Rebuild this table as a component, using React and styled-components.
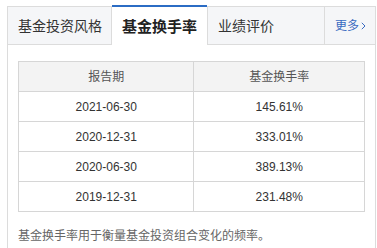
import React from "react";
import styled, { createGlobalStyle } from "styled-components";

const Global = createGlobalStyle`
  html, body { margin: 0; padding: 0; background: #fff; }
  body {
    font-family: "Liberation Sans", "Noto Sans CJK SC", sans-serif;
    color: #333;
  }
`;

const Page = styled.div`
  padding: 6px 0 0 7px;
`;

const Panel = styled.div`
  box-sizing: border-box;
  width: 369px;
  border-left: 1px solid #dcdcdc;
  border-right: 1px solid #dcdcdc;
  min-height: 242px;
`;

const TabBar = styled.div`
  display: flex;
  align-items: flex-start;
  height: 39px;
`;

const Tab = styled.div`
  box-sizing: border-box;
  display: flex;
  align-items: center;
  height: ${(p) => (p.$active ? "40px" : "39px")};
  margin-top: ${(p) => (p.$active ? "-1px" : "0")};
  padding: ${(p) => p.$pad || "0 10px"};
  flex: ${(p) => (p.$grow ? "1 1 auto" : "0 0 auto")};
  width: ${(p) => p.$width || "auto"};
  background: ${(p) => (p.$active ? "#fff" : "#f5f6f8")};
  border-top: ${(p) => (p.$active ? "2px solid #2b6cc4" : "1px solid #dcdcdc")};
  border-bottom: ${(p) => (p.$active ? "none" : "1px solid #dcdcdc")};
  border-right: ${(p) => (p.$divider ? "1px solid #dcdcdc" : "none")};
  border-left: ${(p) => (p.$leftDivider ? "1px solid #dcdcdc" : "none")};
  font-size: ${(p) => (p.$active ? "15px" : "14px")};
  font-weight: ${(p) => (p.$active ? 700 : 400)};
  color: ${(p) => (p.$active ? "#222" : "#333")};
  white-space: nowrap;
  line-height: 1;
`;

const More = styled.span`
  display: flex;
  align-items: center;
  gap: 2px;
  font-size: 12px;
  color: #3a6bc1;
`;

const Content = styled.div`
  padding: 16px 10px 0 10px;
`;

const Table = styled.table`
  border-collapse: separate;
  border-spacing: 0;
  width: 347px;
  border-top: 1px solid #d6d6d6;
  border-left: 1px solid #d6d6d6;
  font-size: 12px;
`;

const Cell = styled.td`
  box-sizing: border-box;
  height: 30px;
  padding: 0;
  width: ${(p) => p.$w};
  text-align: center;
  vertical-align: middle;
  border-right: 1px solid #d6d6d6;
  border-bottom: 1px solid #d6d6d6;
  background: ${(p) => (p.$head ? "#f3f3f3" : "#fff")};
  color: ${(p) => (p.$head ? "#555" : "#333")};
  font-weight: 400;
  line-height: 16px;
`;

const Note = styled.p`
  margin: 15px 0 0 0;
  font-size: 12px;
  line-height: 18px;
  color: #666;
`;

const rows = [
  ["2021-06-30", "145.61%"],
  ["2020-12-31", "333.01%"],
  ["2020-06-30", "389.13%"],
  ["2019-12-31", "231.48%"],
];

const Chevron = () => (
  <svg width="5" height="8" viewBox="0 0 5 8" fill="none">
    <path d="M0.8 0.8 L4 4 L0.8 7.2" stroke="#3a6bc1" strokeWidth="1" />
  </svg>
);

export default function App() {
  return (
    <>
      <Global />
      <Page>
        <Panel>
          <TabBar>
            <Tab $divider $pad="0 9px 0 10px">基金投资风格</Tab>
            <Tab $active $width="95px">基金换手率</Tab>
            <Tab $grow $leftDivider $divider>业绩评价</Tab>
            <Tab $width="50px" $pad="0 0 0 10px">
              <More>
                更多
                <Chevron />
              </More>
            </Tab>
          </TabBar>
          <Content>
            <Table>
              <thead>
                <tr>
                  <Cell as="th" $head $w="176px">报告期</Cell>
                  <Cell as="th" $head $w="171px">基金换手率</Cell>
                </tr>
              </thead>
              <tbody>
                {rows.map(([d, v]) => (
                  <tr key={d}>
                    <Cell $w="176px">{d}</Cell>
                    <Cell $w="171px">{v}</Cell>
                  </tr>
                ))}
              </tbody>
            </Table>
            <Note>基金换手率用于衡量基金投资组合变化的频率。</Note>
          </Content>
        </Panel>
      </Page>
    </>
  );
}
